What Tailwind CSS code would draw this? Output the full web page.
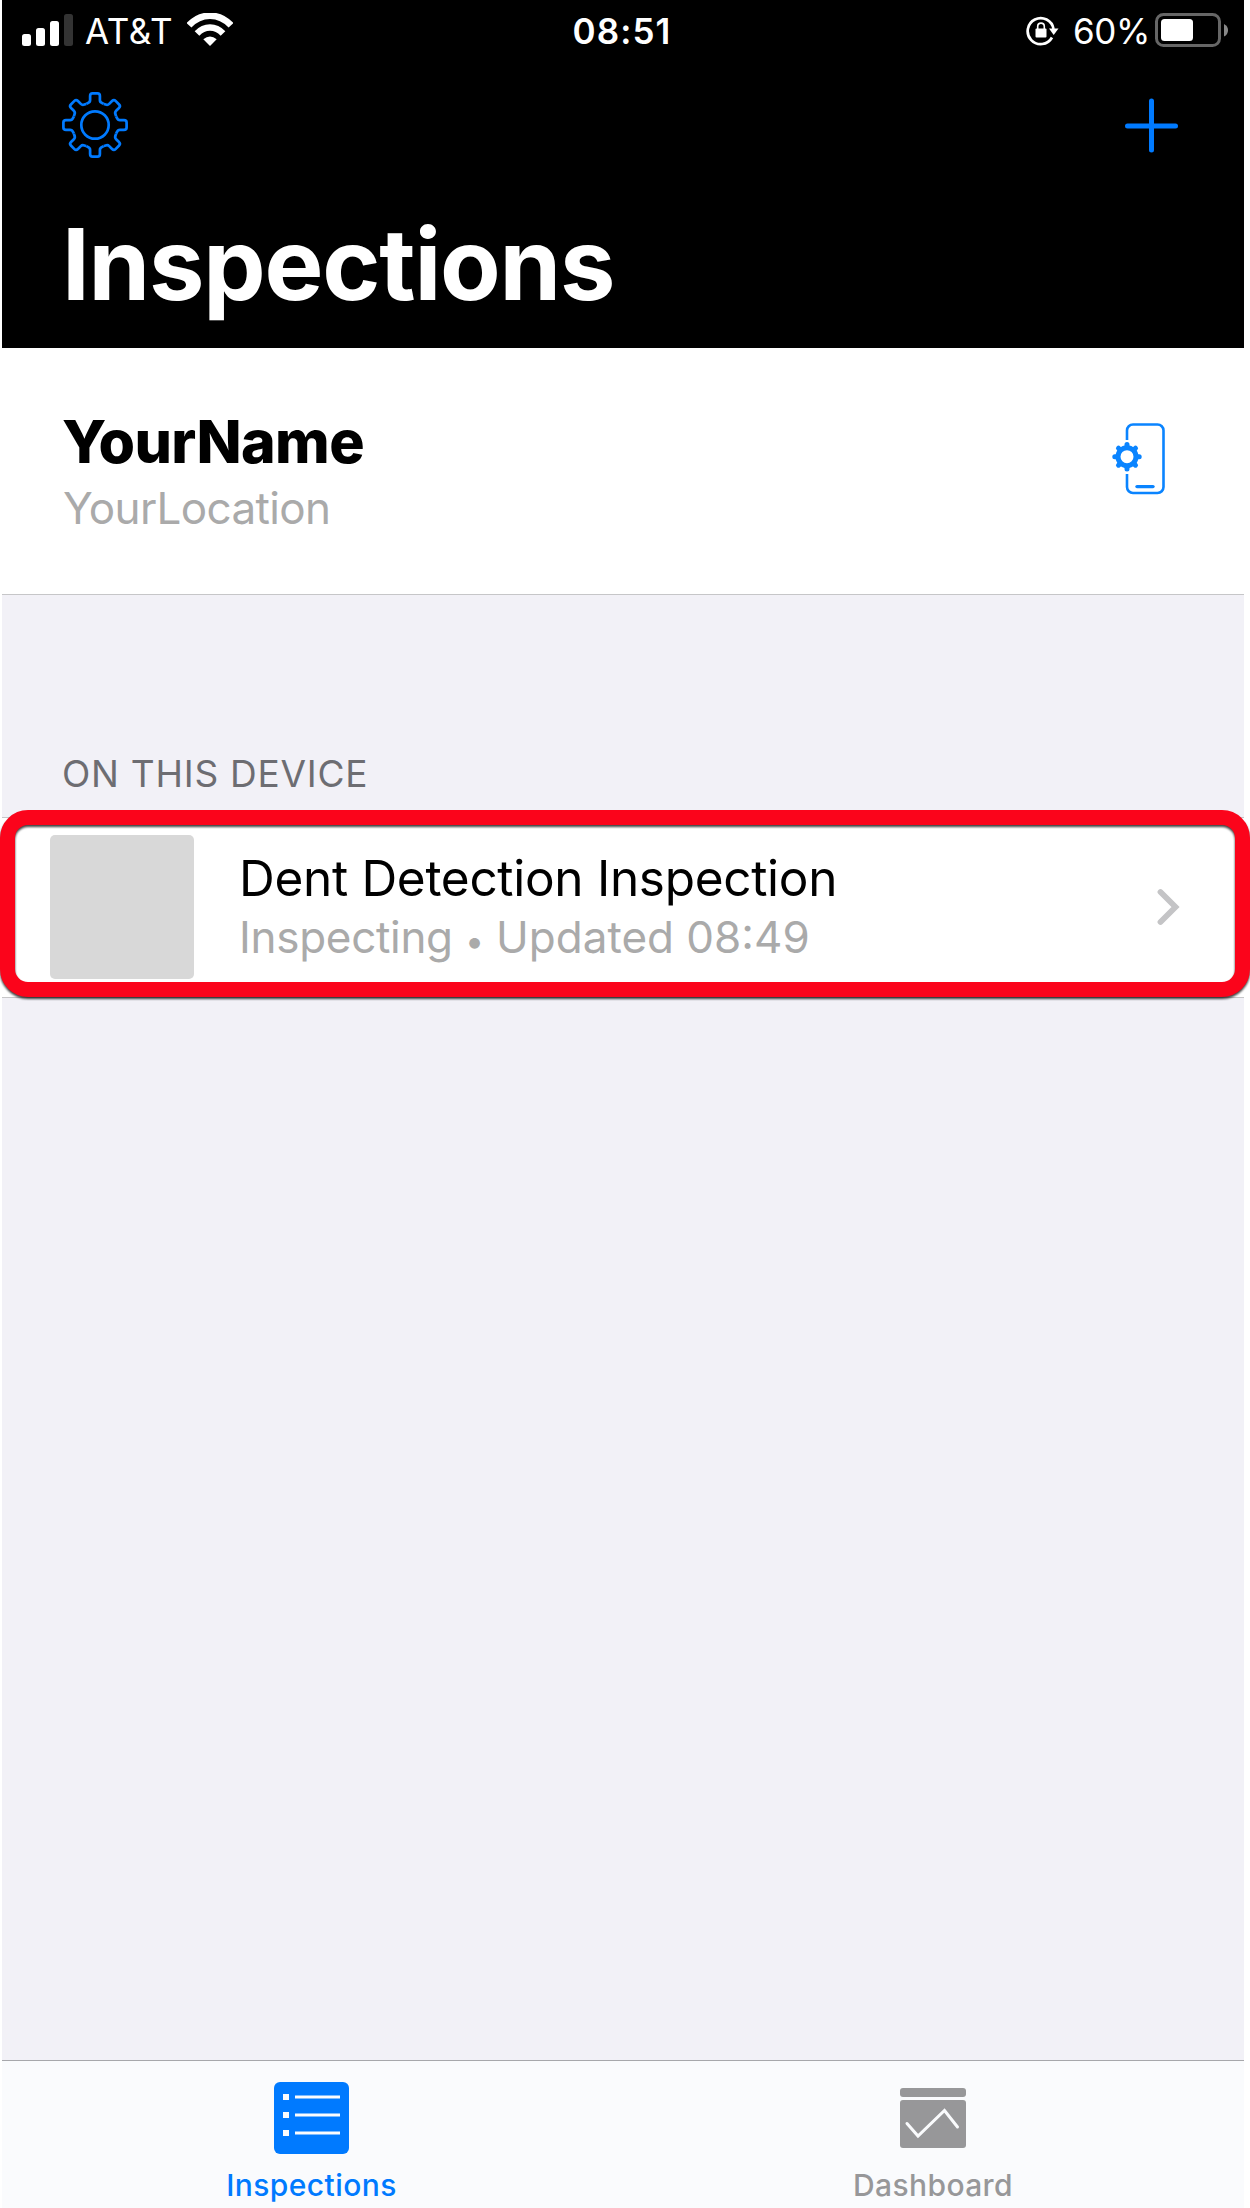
<!DOCTYPE html>
<html lang="en">
<head>
<meta charset="utf-8">
<title>Inspections</title>
<script src="https://cdn.jsdelivr.net/npm/@tailwindcss/browser@4"></script>
</head>
<body class="bg-white font-['Inter',sans-serif]">
<div class="relative w-[1250px] h-[2208px] overflow-hidden pl-[2px] pr-[6px] flex flex-col">

  <header class="bg-black text-white h-[348px] shrink-0">
    <!-- Status bar -->
    <div class="grid grid-cols-3 items-center h-[62px] pl-5 pr-4 text-[35px] leading-[40px]">
      <div class="flex items-center">
        <svg class="w-[51px] h-[34px]" viewBox="0 0 51 34" fill="#fff">
          <rect x="0" y="20" width="9" height="12" rx="2.5"/>
          <rect x="14" y="14" width="9" height="18" rx="2.5"/>
          <rect x="28" y="7" width="9" height="25" rx="2.5"/>
          <rect x="42" y="0" width="9" height="32" rx="2.5" fill="#333"/>
        </svg>
        <span class="ml-[12px] tracking-[0.62px]">AT&amp;T</span>
        <svg class="ml-[14px] w-[46px] h-[36px]" viewBox="0 0 46 36">
          <path d="M2 12.3C14-.5 32-.5 44 12.3" fill="none" stroke="#fff" stroke-width="6.6"/>
          <path d="M10 20.5C17.5 12.500 28.500 12.500 36 20.500" fill="none" stroke="#fff" stroke-width="6.4"/>
          <path d="M16.300 26.300Q23 20.600 29.700 26.300L23 33Z" fill="#fff"/>
        </svg>
      </div>
      <span class="justify-self-center font-semibold tracking-[1.08px] mr-[6px]">08:51</span>
      <div class="flex items-center justify-self-end">
        <svg class="w-[34px] h-[32px]" viewBox="0 0 34 32">
          <path d="M26 22.500A13 13 0 1 1 27.500 14" fill="none" stroke="#fff" stroke-width="2.700"/>
          <path d="M23 13.500h9.500L27.700 20Z" fill="#fff"/>
          <rect x="9.500" y="13.500" width="11" height="9" rx="1" fill="#fff"/>
          <path d="M11.700 14v-2.600a3.300 3.300 0 0 1 6.600 0V14" fill="none" stroke="#fff" stroke-width="1.600"/>
        </svg>
        <span class="ml-[13px] tracking-[-0.39px]">60%</span>
        <svg class="ml-[5px] w-[73px] h-[36px]" viewBox="0 0 73 36">
          <rect x="1.500" y="1.500" width="63" height="31" rx="7" fill="none" stroke="#666" stroke-width="3"/>
          <rect x="6" y="6" width="32" height="22" rx="3.500" fill="#fff"/>
          <path d="M69 11q4 2 4 6.300t-4 6.300Z" fill="#888"/>
        </svg>
      </div>
    </div>
    <!-- Toolbar -->
    <div class="flex items-center justify-between h-[125px] pl-[58px] pr-[62px]">
      <svg class="w-[70px] h-[70px]" viewBox="-35 -35 70 70" fill="none" stroke="#007aff" stroke-width="2.700">
        <defs><path id="tooth" d="M-8.700-21.100L-7-22Q-4.900-22.800-4.900-25V-29Q-4.900-31.600-2.500-31.600H2.500Q4.900-31.600 4.900-29V-25Q4.900-22.800 7-22L8.700-21.100"/></defs>
        <circle r="13.700"/>
        <use href="#tooth"/><use href="#tooth" transform="rotate(45)"/><use href="#tooth" transform="rotate(90)"/><use href="#tooth" transform="rotate(135)"/>
        <use href="#tooth" transform="rotate(180)"/><use href="#tooth" transform="rotate(225)"/><use href="#tooth" transform="rotate(270)"/><use href="#tooth" transform="rotate(315)"/>
      </svg>
      <svg class="w-[61px] h-[60px]" viewBox="0 0 61 60" fill="none" stroke="#007aff" stroke-width="5" stroke-linecap="round"><path d="M30.500 6v49M6.500 31h48"/></svg>
    </div>
    <h1 class="pl-[60px] mt-[22px] text-[99px] leading-[110px] font-bold tracking-[-1.19px]">Inspections</h1>
  </header>

  <!-- Profile -->
  <section class="flex items-start justify-between h-[247px] shrink-0 bg-white border-b border-[#c6c6c8] pl-[60px] pr-[78px]">
    <div class="pt-[59px]">
      <h2 class="text-[59px] leading-[70px] font-extrabold tracking-[-0.6px] text-black">YourName</h2>
      <p class="mt-[4px] pl-px text-[44px] leading-[54px] tracking-[-0.65px] text-[#aaa]">YourLocation</p>
    </div>
    <svg class="mt-[74px] w-[55px] h-[74px]" viewBox="0 0 55 74" fill="none" stroke="#0a84ff">
      <path d="M16 18V8.500a6 6 0 0 1 6-6H46.500a6 6 0 0 1 6 6V65a6 6 0 0 1-6 6H22a6 6 0 0 1-6-6V52" stroke-width="2.600"/>
      <path d="M26 64.600h16" stroke-width="3.400" stroke-linecap="round"/>
      <g transform="translate(16 34.700)">
        <circle r="9" stroke-width="5"/>
        <path d="M0-10v-2.200M0 10v2.200M-10 0h-2.200M10 0h2.200M-7.200-7.200l-1.300-1.300M7.200 7.200l1.300 1.300M-7.200 7.200l-1.300 1.300M7.200-7.200l1.300-1.300" stroke-width="5" stroke-linecap="round"/>
      </g>
    </svg>
  </section>

  <main class="flex-1 bg-[#f2f1f7]">
    <h3 class="mt-[156px] pl-[60px] text-[37px] leading-[46px] tracking-[0.76px] text-[#6d6d72]">ON THIS DEVICE</h3>
    <div class="mt-[20px] flex h-[181px] bg-white border-y border-[#c6c6c8] pl-12">
      <div class="mt-[17px] size-36 rounded-[5px] bg-[#d8d8d8]"></div>
      <div class="pl-[45px] pt-[31px]">
        <p class="text-[49.5px] leading-[58px] tracking-[-0.3px] text-black whitespace-nowrap">Dent Detection Inspection</p>
        <p class="mt-[3px] text-[44px] leading-[54px] tracking-[-0.3px] text-[#aaa] whitespace-nowrap">Inspecting <span class="text-[34px] leading-none">•</span><span class="tracking-[0px]"> Updated 08:49</span></p>
      </div>
      <svg class="ml-auto mr-[63px] mt-[69px] w-[26px] h-[40px]" viewBox="0 0 26 40" fill="none" stroke="#c4c4c6" stroke-width="5.800" stroke-linecap="round"><path d="M5.500 5L20.500 20L5.500 35"/></svg>
    </div>
  </main>

  <!-- Tab bar -->
  <nav class="grid grid-cols-2 h-[148px] shrink-0 bg-[#fafbfd] border-t border-[#a7a7ab] text-[30px] leading-[36px] font-medium">
    <div class="flex flex-col items-center pt-[21px] pr-[2px] text-[#007aff]">
      <svg class="w-[75px] h-[72px]" viewBox="0 0 75 72">
        <rect width="75" height="72" rx="6" fill="#007aff"/>
        <path d="M9 12h6v6H9zM9 30h6v6H9zM9 48h6v6H9z" fill="#fafbfd"/>
        <path d="M21 15h45M21 33h45M21 51h45" stroke="#fafbfd" stroke-width="3.200"/>
      </svg>
      <span class="mt-[13px] tracking-[0.42px]">Inspections</span>
    </div>
    <div class="flex flex-col items-center pt-[27px] pr-px text-[#979799]">
      <svg class="w-[66px] h-[60px]" viewBox="0 0 66 60">
        <rect width="66" height="9" rx="3" fill="#979799"/>
        <rect y="12" width="66" height="48" rx="3" fill="#979799"/>
        <path d="M7 35.500L18 48L44.500 22.500L57.500 39" fill="none" stroke="#fafbfd" stroke-width="3" stroke-linecap="round"/>
      </svg>
      <span class="mt-[19px] tracking-[0.39px]">Dashboard</span>
    </div>
  </nav>

  <!-- Highlight frame laid over the first row -->
  <div class="absolute left-0 top-[810px] w-[1250px] h-[187px] rounded-[28px] border-[15px] border-[#fb041b] drop-shadow-[0_2px_1px_rgba(0,0,0,0.75)]"></div>
</div>
</body>
</html>
